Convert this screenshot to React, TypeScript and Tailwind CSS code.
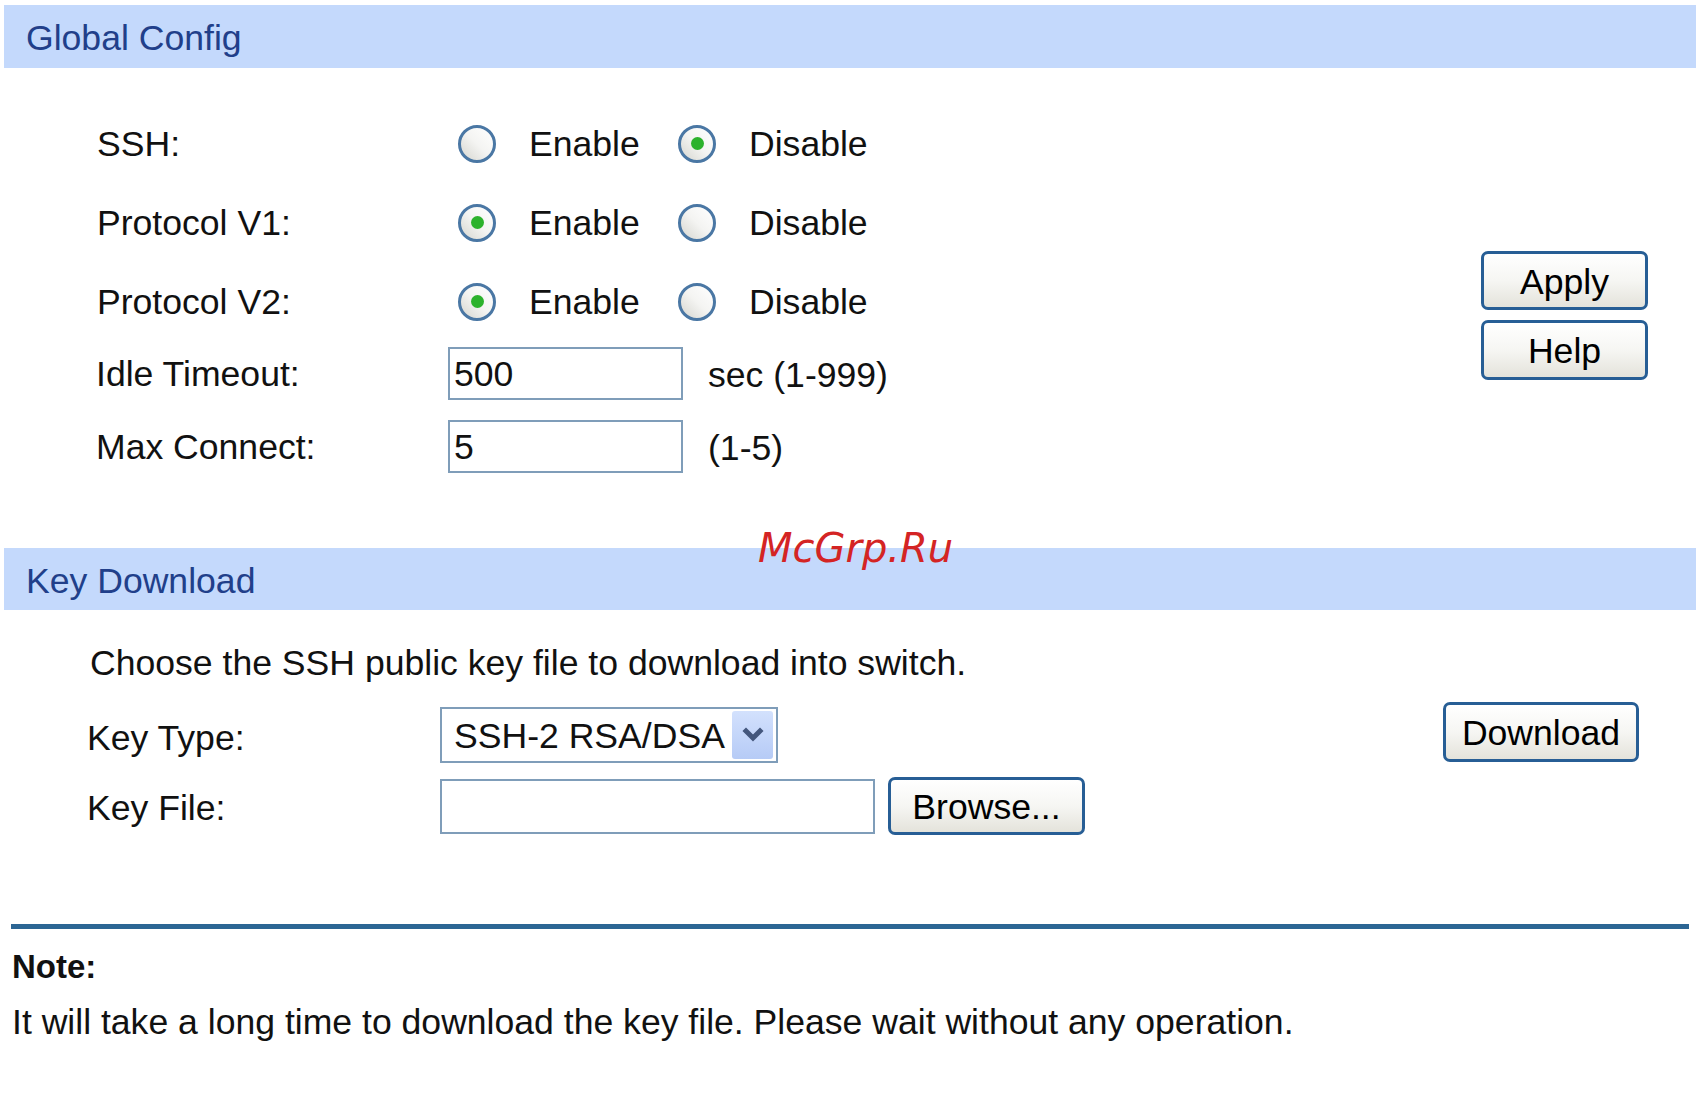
import type { ReactNode } from "react";
import clsx from "clsx";

function Radio({ checked }: { checked?: boolean }) {
  return (
    <span className="flex h-[38px] w-[38px] shrink-0 items-center justify-center rounded-full border-[3px] border-[#4a77a4] bg-linear-to-tr from-[#d6d6d0] via-[#f4f4f2] to-white">
      {checked && <span className="h-[13px] w-[13px] rounded-full bg-[#2cb22c]" />}
    </span>
  );
}

function Btn({ children, className }: { children: ReactNode; className?: string }) {
  return (
    <button
      className={clsx(
        "flex items-center justify-center rounded-[7px] border-[3px] border-[#275e95] bg-linear-to-b from-white via-[#f6f6f3] to-[#e4e3db] pt-[4px] leading-none text-black",
        className
      )}
    >
      {children}
    </button>
  );
}

function SectionHead({ title, className }: { title: string; className?: string }) {
  return (
    <div className={clsx("ml-[4px] mr-[6px] flex items-center bg-[#c4d9fc] pl-[22px] pt-[5px] text-[#213f8a]", className)}>
      {title}
    </div>
  );
}

function RadioRow({ label, enabled }: { label: string; enabled: boolean }) {
  return (
    <div className="flex h-[79px] items-center">
      <span className="w-[354px] pl-[3px] pt-[2px]">{label}</span>
      <div className="flex items-center pl-[10px]">
        <label className="flex w-[220px] items-center gap-[33px]">
          <Radio checked={enabled} />
          <span className="pt-[2px]">Enable</span>
        </label>
        <label className="flex items-center gap-[33px]">
          <Radio checked={!enabled} />
          <span className="pt-[2px]">Disable</span>
        </label>
      </div>
    </div>
  );
}

function InputRow({ label, value, hint, className }: { label: string; value: string; hint: string; className?: string }) {
  return (
    <div className={clsx("flex h-[53px] items-center", className)}>
      <span className="w-[354px] pl-[2px] pt-[3px]">{label}</span>
      <div className="flex h-[53px] w-[235px] items-center border-2 border-[#7f9db9] bg-white px-[4px] pt-[2px]">{value}</div>
      <span className="ml-[25px] pt-[4px]">{hint}</span>
    </div>
  );
}

export default function App() {
  return (
    <div className="relative h-[1093px] w-[1702px] overflow-hidden bg-white font-['Liberation_Sans',Arial,sans-serif] text-[35.6px] leading-none text-[#111]">
      <SectionHead title="Global Config" className="mt-[5px] h-[63px]" />

      {/* global config form + buttons */}
      <div className="flex pt-[36px]">
        <div className="flex-1 pl-[94px]">
          <RadioRow label="SSH:" enabled={false} />
          <RadioRow label="Protocol V1:" enabled />
          <RadioRow label="Protocol V2:" enabled />
          <InputRow label="Idle Timeout:" value="500" hint="sec (1-999)" className="mt-[6px]" />
          <InputRow label="Max Connect:" value="5" hint="(1-5)" className="mt-[20px]" />
        </div>
        <div className="flex flex-col gap-[10px] pr-[54px] pt-[147px]">
          <Btn className="h-[59px] w-[167px]">Apply</Btn>
          <Btn className="h-[60px] w-[167px]">Help</Btn>
        </div>
      </div>

      <SectionHead title="Key Download" className="mt-[75px] h-[62px]" />

      <div className="mt-[32px] flex h-[40px] items-center pl-[90px] pt-[4px]">
        Choose the SSH public key file to download into switch.
      </div>

      <div className="mt-[25px] flex">
        <div className="flex-1 pl-[85px]">
          <div className="flex h-[56px] items-center">
            <span className="w-[355px] pl-[2px] pt-[8px]">Key Type:</span>
            <div className="flex h-[56px] w-[338px] items-center justify-between border-2 border-[#7f9db9] bg-white pl-[12px] pr-[3px]">
              <span className="pt-[3px]">SSH-2 RSA/DSA</span>
              <span className="flex h-[48px] w-[41px] items-center justify-center rounded-[3px] bg-linear-to-b from-[#d3e1fd] to-[#b6cbf6]">
                <svg width="22" height="16" viewBox="0 0 22 16" fill="none" stroke="#44577d" strokeWidth="5" strokeLinecap="square">
                  <path d="M4 4l7 7 7-7" />
                </svg>
              </span>
            </div>
          </div>
          <div className="mt-[14px] flex h-[58px] items-center">
            <span className="w-[355px] pl-[2px] pt-[6px]">Key File:</span>
            <div className="h-[55px] w-[435px] border-2 border-[#7f9db9] bg-white" />
            <Btn className="ml-[13px] h-[58px] w-[197px]">Browse...</Btn>
          </div>
        </div>
        <div className="-mt-[5px] pr-[63px]">
          <Btn className="h-[60px] w-[196px]">Download</Btn>
        </div>
      </div>

      <div className="ml-[11px] mr-[13px] mt-[89px] h-[5px] bg-[#2c6694]" />

      <div className="mt-[16px] flex h-[40px] items-center pl-[12px] pt-[3px] text-[33px] font-bold">Note:</div>
      <div className="mt-[16px] flex h-[40px] items-center pl-[12px] pt-[3px]">
        It will take a long time to download the key file. Please wait without any operation.
      </div>

      {/* watermark */}
      <span className="absolute left-[758px] top-[528px] font-['DejaVu_Sans',sans-serif] text-[40px] italic leading-none text-[#d42424]">
        McGrp.Ru
      </span>
    </div>
  );
}
